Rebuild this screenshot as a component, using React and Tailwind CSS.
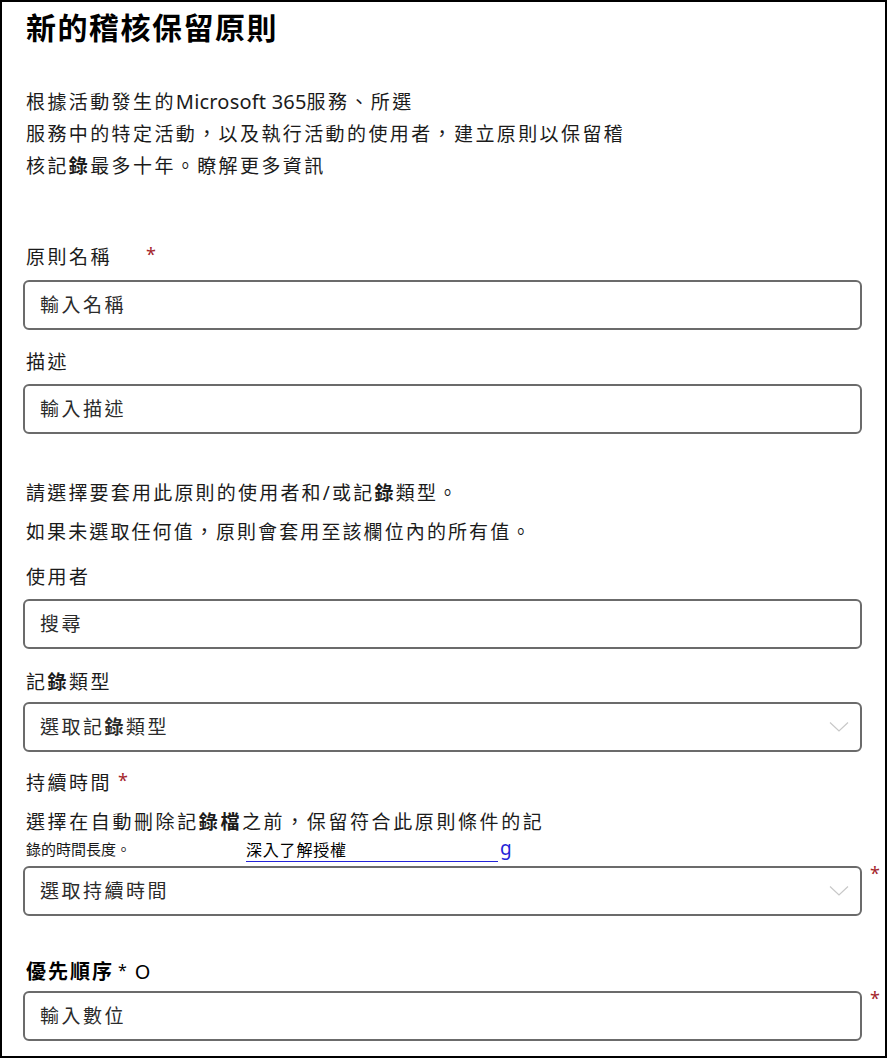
import React from "react";

const Star = ({ className = "" }) => (
  <span className={`text-[#a4262c] text-[18px] ${className}`}>*</span>
);

const Chevron = () => (
  <svg width="20" height="12" viewBox="0 0 20 12" className="shrink-0">
    <polyline points="1,1.5 10,10 19,1.5" fill="none" stroke="#c8c8c8" strokeWidth="1.2" />
  </svg>
);

const Field = ({ placeholder, select = false, required = false }) => (
  <div className="flex items-start">
    <div className="w-[839px] h-[50px] border-2 border-[#6b6b6b] rounded-[6px] bg-white flex items-center justify-between pl-[15px] pr-[11px]">
      <span className="text-[19px] tracking-[2.5px] text-[#2b2b2b]">{placeholder}</span>
      {select ? <Chevron /> : null}
    </div>
    {required ? <Star className="ml-[8px] -mt-[2px] leading-none" /> : null}
  </div>
);

const B = ({ children }) => <span className="font-bold">{children}</span>;

export default function App() {
  return (
    <div className="w-[887px] h-[1058px] border-2 border-black bg-white text-[#1b1b1b] [font-family:'Noto_Sans','Noto_Sans_CJK_TC',sans-serif] overflow-hidden">
      <div className="pl-[21px]">
        <h1 className="h-[50px] flex items-center pl-[3px] text-[30px] font-bold tracking-[1.5px] text-black">
          新的稽核保留原則
        </h1>

        <div className="mt-[34px] pl-[3px] text-[19px] tracking-[2.4px] leading-[32px]">
          <p>
            根據活動發生的<span className="tracking-[0.2px] text-[20px]">Microsoft 365</span>服務、所選
          </p>
          <p>服務中的特定活動，以及執行活動的使用者，建立原則以保留稽</p>
          <p>核記<B>錄</B>最多十年。瞭解更多資訊</p>
        </div>

        <div className="mt-[59px] h-[32px] flex items-center pl-[3px] text-[19px] tracking-[2.5px]">
          原則名稱
          <Star className="ml-[34px] -mt-[6px]" />
        </div>
        <div className="mt-[7px]">
          <Field placeholder="輸入名稱" />
        </div>

        <div className="mt-[16px] h-[32px] flex items-center pl-[3px] text-[19px] tracking-[2.5px]">描述</div>
        <div className="mt-[6px]">
          <Field placeholder="輸入描述" />
        </div>

        <div className="mt-[43px] h-[32px] flex items-center pl-[3px] text-[19px] tracking-[2.2px]">
          請選擇要套用此原則的使用者和/或記<B>錄</B>類型。
        </div>
        <div className="mt-[7px] h-[32px] flex items-center pl-[3px] text-[19px] tracking-[2.1px]">
          如果未選取任何值，原則會套用至該欄位內的所有值。
        </div>

        <div className="mt-[13px] h-[32px] flex items-center pl-[3px] text-[19px] tracking-[2.5px]">使用者</div>
        <div className="mt-[6px]">
          <Field placeholder="搜尋" />
        </div>

        <div className="mt-[17px] h-[32px] flex items-center pl-[3px] text-[19px] tracking-[2.5px]">
          記<B>錄</B>類型
        </div>
        <div className="mt-[4px]">
          <Field placeholder={<>選取記<B>錄</B>類型</>} select />
        </div>

        <div className="mt-[15px] h-[32px] flex items-center pl-[3px] text-[19px] tracking-[2.5px]">
          持續時間
          <Star className="ml-[6px] -mt-[6px]" />
        </div>
        <div className="mt-[7px] h-[32px] flex items-center pl-[3px] text-[19px] tracking-[2.6px]">
          選擇在自動刪除記<B>錄檔</B>之前，保留符合此原則條件的記
        </div>
        <div className="h-[22px] flex items-center pl-[3px]">
          <span className="w-[220px] text-[15px]">錄的時間長度。</span>
          <span className="relative flex items-center">
            <span className="text-[16px] tracking-[0.8px] text-black w-[252px] border-b-[1.5px] border-[#2424d8] h-[23px] flex items-center mt-[2px]">
              深入了解授權
            </span>
            <span className="ml-[2px] text-[19px] leading-none text-[#2424d8] -mt-[2px]">g</span>
          </span>
        </div>
        <div className="mt-[6px]">
          <Field placeholder="選取持續時間" select required />
        </div>

        <div className="mt-[40px] h-[32px] flex items-center pl-[3px] text-[20px] font-bold tracking-[2px] text-black">
          優先順序
          <span className="ml-[4px] text-[16px] font-normal -mt-[4px]">*</span>
          <span className="ml-[6px] text-[20px] font-normal">O</span>
        </div>
        <div className="mt-[3px]">
          <Field placeholder="輸入數位" required />
        </div>
      </div>
    </div>
  );
}
